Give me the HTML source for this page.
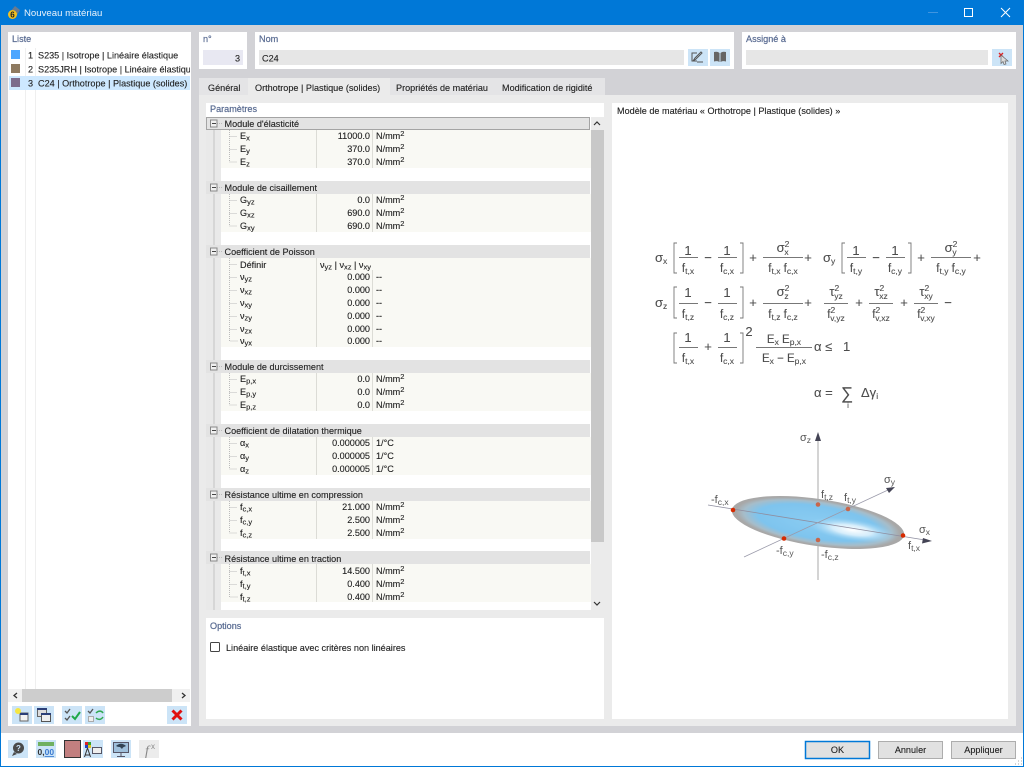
<!DOCTYPE html>
<html><head><meta charset="utf-8"><title>Nouveau matériau</title>
<style>
html,body{margin:0;padding:0;background:#fff;width:1024px;height:767px;overflow:hidden}
svg{display:block;font-family:"Liberation Sans",sans-serif;font-size:9px;fill:#222}
#root{filter:blur(.3px)}
.h{fill:#5a6c92;font-size:9.1px;stroke:#5a6c92;stroke-width:.22}
.b{fill:#222;font-size:9.1px;stroke:#222;stroke-width:.12}
.e{text-anchor:end}
.s{font-size:7.5px}
.f{fill:#4c4c4c;font-size:13px;stroke:#4c4c4c;stroke-width:.1}
.f .s{font-size:8.5px}
.c{text-anchor:middle}
.f .g{font-size:11.5px}
.gr{fill:#555;font-size:11px}
.gr .s{font-size:8.5px}
.d{stroke:#777;stroke-width:.9}
.t{stroke:#bbb;stroke-width:1;fill:none;stroke-dasharray:1 1}
.br{stroke:#777;stroke-width:.9;fill:none}
.ib{fill:#cce4f7}
</style></head><body>
<svg id="root" width="1024" height="767" viewBox="0 0 1024 767" xmlns="http://www.w3.org/2000/svg">
<rect width="1024" height="767" fill="#fff"/>
<rect x="0" y="0" width="1024" height="25" fill="#0078d7"/>
<rect x="1" y="25" width="1022" height="708" fill="#d2d2d6"/>
<rect x="0" y="25" width="1" height="742" fill="#0078d7"/><rect x="1023" y="25" width="1" height="742" fill="#0078d7"/><rect x="0" y="766" width="1024" height="1" fill="#0078d7"/>
<path d="M10 12l5-6 5 4-3 5z" fill="#6a7a8e"/><circle cx="12.500" cy="14.500" r="4.500" fill="#f0c020"/><text x="12.500" y="17.500" class="c" style="font-size:8px;font-weight:bold;fill:#222">6</text>
<text x="24" y="16" style="font-size:9.6px;fill:#e8f2fb">Nouveau matériau</text>
<rect x="928" y="12" width="10" height="1" fill="#3f95e0"/>
<rect x="964.500" y="8.500" width="8" height="8" fill="none" stroke="#fff"/>
<path d="M1001 8l9 9M1010 8l-9 9" stroke="#fff" stroke-width="1" fill="none"/>

<!-- list panel -->
<rect x="8" y="32" width="183" height="694" fill="#fff"/>
<text x="12" y="42" class="h">Liste</text>
<rect x="25" y="48" width="1" height="641" fill="#efefef"/><rect x="35" y="48" width="1" height="641" fill="#efefef"/>
<rect x="9" y="76" width="181" height="14" fill="#cde8ff"/>
<rect x="11" y="50" width="9" height="9" fill="#4da6ff"/><rect x="11" y="64" width="9" height="9" fill="#8e7a60"/><rect x="11" y="78" width="9" height="9" fill="#7c6c8c"/>
<text x="33" y="58.500" class="e b">1</text><text x="33" y="72.500" class="e b">2</text><text x="33" y="86.500" class="e b">3</text>
<text x="38" y="58.500" class="b">S235 | Isotrope | Linéaire élastique</text>
<svg x="0" y="60" width="190" height="16"><text x="38" y="12.500" class="b">S235JRH | Isotrope | Linéaire élastique</text></svg>
<text x="38" y="86.500" class="b">C24 | Orthotrope | Plastique (solides)</text>
<rect x="8" y="689" width="182" height="13" fill="#f0f0f0"/><rect x="22" y="689" width="150" height="13" fill="#cdcdcd"/>
<path d="M17 693l-3 2.500 3 2.500M182 693l3 2.500-3 2.500" stroke="#333" stroke-width="1.300" fill="none"/>
<!-- list toolbar -->
<rect x="12" y="706" width="20" height="18" class="ib"/><rect x="34" y="706" width="20" height="18" class="ib"/><rect x="62" y="706" width="20" height="18" class="ib"/><rect x="85" y="706" width="20" height="18" class="ib"/><rect x="167" y="706" width="20" height="18" class="ib"/>
<rect x="20" y="713" width="8" height="8" fill="#f3f3f3" stroke="#666"/><rect x="20" y="713" width="8" height="2" fill="#2b3f78"/><circle cx="18" cy="711" r="3" fill="#f5e642"/>
<rect x="37.500" y="708.500" width="9" height="8" fill="#ddd" stroke="#666"/><rect x="37" y="708" width="10" height="2" fill="#2b3f78"/><rect x="41.500" y="713.500" width="9" height="8" fill="#eee" stroke="#555"/><rect x="41" y="713" width="10" height="2" fill="#2b3f78"/>
<path d="M65 711l2 2 3-4M65 718l2 2 3-4" stroke="#555" stroke-width="1.300" fill="none"/><path d="M72 716l3 3 5-7" stroke="#1fa84a" stroke-width="2" fill="none"/>
<path d="M88 711l2 2 3-4" stroke="#555" stroke-width="1.300" fill="none"/><rect x="88.500" y="716.500" width="5" height="5" fill="#eee" stroke="#aaa"/><path d="M96 713c3-3 6-2 7 0M103 717c-2 3-5 3-7 1" stroke="#2fa84f" stroke-width="1.500" fill="none"/>
<path d="M172.500 710.500l9 9M181.500 710.500l-9 9" stroke="#e01010" stroke-width="3" fill="none"/>

<!-- n° -->
<rect x="199" y="32" width="48" height="37" fill="#fff"/>
<text x="203" y="42" class="h">n°</text>
<rect x="203" y="50" width="40" height="15" fill="#e8e8f2"/>
<text x="240" y="61.500" class="e b">3</text>
<!-- Nom -->
<rect x="255" y="32" width="479" height="37" fill="#fff"/>
<text x="259" y="42" class="h">Nom</text>
<rect x="259" y="50" width="425" height="15" fill="#e6e6e6"/>
<text x="262" y="61.500" class="b">C24</text>
<rect x="688" y="49" width="20" height="17" class="ib"/><rect x="710" y="49" width="20" height="17" class="ib"/>
<path d="M697 53h-5v8h5M693 61l2-3 6-6 1 1-6 6zM697 62h6" stroke="#555" stroke-width="1" fill="none"/>
<path d="M714 52c2-.5 4-.5 5.500 1v9c-1.500-1-3.500-1-5.500-.5zM720.500 53c1.500-1.500 3.500-1.500 5.500-1v9.500c-2-.5-4-.5-5.500.5z" fill="#666"/>
<!-- Assigné -->
<rect x="742" y="32" width="274" height="37" fill="#fff"/>
<text x="746" y="42" class="h">Assigné à</text>
<rect x="746" y="50" width="242" height="15" fill="#e6e6e6"/>
<rect x="992" y="49" width="20" height="17" class="ib"/>
<path d="M999 53l4 4M1003 53l-4 4" stroke="#e02020" stroke-width="1.300"/><path d="M1001 55l7 6-3 0 1 3-2 .500-1-3-2 2z" fill="#ddd" stroke="#666" stroke-width=".7"/>

<!-- tabs -->
<rect x="199" y="78" width="49" height="17" fill="#e4e4e6"/>
<rect x="248" y="78" width="142" height="17" fill="#ebebeb"/>
<rect x="390" y="78" width="106" height="17" fill="#e4e4e6"/>
<rect x="496" y="78" width="109" height="17" fill="#e4e4e6"/>
<text x="208" y="91" class="b">Général</text>
<text x="255" y="91" class="b">Orthotrope | Plastique (solides)</text>
<text x="396" y="91" class="b">Propriétés de matériau</text>
<text x="502" y="91" class="b">Modification de rigidité</text>
<rect x="199" y="95" width="817" height="631" fill="#ebebeb"/>

<!-- params -->
<rect x="206" y="103" width="398" height="507" fill="#fff"/>
<text x="210" y="112" class="h">Paramètres</text>
<rect x="206" y="117" width="15" height="493" fill="#e9e9e9"/><rect x="213" y="130" width="2" height="480" fill="#d6d6d6"/>
<rect x="591" y="117" width="13" height="493" fill="#ebebeb"/><rect x="591" y="130" width="13" height="412" fill="#c8c8c8"/>
<path d="M594 125l3-3 3 3M594 602l3 3 3-3" stroke="#333" stroke-width="1.200" fill="none"/>

<!-- bands -->
<g fill="#e3e3e3">
<rect x="206" y="117" width="384" height="13"/><rect x="206" y="181" width="384" height="13"/><rect x="206" y="245" width="384" height="13"/><rect x="206" y="360" width="384" height="13"/><rect x="206" y="424" width="384" height="13"/><rect x="206" y="488" width="384" height="13"/><rect x="206" y="551" width="384" height="13"/>
</g>
<rect x="206.500" y="117.500" width="383" height="12" fill="none" stroke="#666" stroke-dasharray="1 1"/>
<g fill="#f9f9f4">
<rect x="221" y="130" width="370" height="38"/><rect x="221" y="194" width="370" height="38"/><rect x="221" y="258" width="370" height="89"/><rect x="221" y="373" width="370" height="38"/><rect x="221" y="437" width="370" height="38"/><rect x="221" y="501" width="370" height="38"/><rect x="221" y="564" width="370" height="38"/>
</g>
<g fill="#dcdcd6">
<rect x="316" y="130" width="1" height="38"/><rect x="372" y="130" width="1" height="38"/>
<rect x="316" y="194" width="1" height="38"/><rect x="372" y="194" width="1" height="38"/>
<rect x="316" y="258" width="1" height="89"/><rect x="372" y="270" width="1" height="77"/>
<rect x="316" y="373" width="1" height="38"/><rect x="372" y="373" width="1" height="38"/>
<rect x="316" y="437" width="1" height="38"/><rect x="372" y="437" width="1" height="38"/>
<rect x="316" y="501" width="1" height="38"/><rect x="372" y="501" width="1" height="38"/>
<rect x="316" y="564" width="1" height="38"/><rect x="372" y="564" width="1" height="38"/>
</g>
<path class="t" d="M229.500 130v32h8M229.500 136.500h8M229.500 149.500h8M229.500 194v32h8M229.500 200.500h8M229.500 213.500h8M229.500 258v83h8M229.500 264.500h8M229.500 277.500h8M229.500 290.500h8M229.500 303.500h8M229.500 316.500h8M229.500 329.500h8M229.500 373v32h8M229.500 379.500h8M229.500 392.500h8M229.500 437v32h8M229.500 443.500h8M229.500 456.500h8M229.500 501v32h8M229.500 507.500h8M229.500 520.500h8M229.500 564v33h8M229.500 571.500h8M229.500 584.500h8"/>
<path class="t" d="M217 123.500h6M217 187.500h6M217 251.500h6M217 366.500h6M217 430.500h6M217 494.500h6M217 557.500h6"/>
<!-- expand boxes -->
<g fill="#f0f0f0" stroke="#888"><rect x="210.500" y="120" width="6.500" height="7"/><rect x="210.500" y="184" width="6.500" height="7"/><rect x="210.500" y="248" width="6.500" height="7"/><rect x="210.500" y="363" width="6.500" height="7"/><rect x="210.500" y="427" width="6.500" height="7"/><rect x="210.500" y="491" width="6.500" height="7"/><rect x="210.500" y="554" width="6.500" height="7"/></g>
<path d="M212 123.500h4M212 187.500h4M212 251.500h4M212 366.500h4M212 430.500h4M212 494.500h4M212 557.500h4" stroke="#444"/>
<!-- section titles -->
<g class="b">
<text x="224.500" y="127">Module d'élasticité</text>
<text x="224.500" y="191">Module de cisaillement</text>
<text x="224.500" y="255">Coefficient de Poisson</text>
<text x="224.500" y="370">Module de durcissement</text>
<text x="224.500" y="434">Coefficient de dilatation thermique</text>
<text x="224.500" y="498">Résistance ultime en compression</text>
<text x="224.500" y="562">Résistance ultime en traction</text>
</g>
<!-- labels -->
<g class="b">
<text x="240" y="139">E<tspan class="s" dy="1.500">x</tspan></text><text x="240" y="152">E<tspan class="s" dy="1.500">y</tspan></text><text x="240" y="165">E<tspan class="s" dy="1.500">z</tspan></text>
<text x="240" y="203">G<tspan class="s" dy="1.500">yz</tspan></text><text x="240" y="216">G<tspan class="s" dy="1.500">xz</tspan></text><text x="240" y="229">G<tspan class="s" dy="1.500">xy</tspan></text>
<text x="240" y="268">Définir</text>
<text x="240" y="280">ν<tspan class="s" dy="1.500">yz</tspan></text><text x="240" y="293">ν<tspan class="s" dy="1.500">xz</tspan></text><text x="240" y="306">ν<tspan class="s" dy="1.500">xy</tspan></text><text x="240" y="319">ν<tspan class="s" dy="1.500">zy</tspan></text><text x="240" y="332">ν<tspan class="s" dy="1.500">zx</tspan></text><text x="240" y="344">ν<tspan class="s" dy="1.500">yx</tspan></text>
<text x="240" y="382">E<tspan class="s" dy="1.500">p,x</tspan></text><text x="240" y="395">E<tspan class="s" dy="1.500">p,y</tspan></text><text x="240" y="408">E<tspan class="s" dy="1.500">p,z</tspan></text>
<text x="240" y="446">α<tspan class="s" dy="1.500">x</tspan></text><text x="240" y="459">α<tspan class="s" dy="1.500">y</tspan></text><text x="240" y="472">α<tspan class="s" dy="1.500">z</tspan></text>
<text x="240" y="510">f<tspan class="s" dy="1.500">c,x</tspan></text><text x="240" y="523">f<tspan class="s" dy="1.500">c,y</tspan></text><text x="240" y="536">f<tspan class="s" dy="1.500">c,z</tspan></text>
<text x="240" y="574">f<tspan class="s" dy="1.500">t,x</tspan></text><text x="240" y="587">f<tspan class="s" dy="1.500">t,y</tspan></text><text x="240" y="600">f<tspan class="s" dy="1.500">t,z</tspan></text>
</g>
<!-- values -->
<g class="b" text-anchor="end">
<text x="370" y="139">11000.0</text><text x="370" y="152">370.0</text><text x="370" y="165">370.0</text>
<text x="370" y="203">0.0</text><text x="370" y="216">690.0</text><text x="370" y="229">690.0</text>
<text x="370" y="280">0.000</text><text x="370" y="293">0.000</text><text x="370" y="306">0.000</text><text x="370" y="319">0.000</text><text x="370" y="332">0.000</text><text x="370" y="344">0.000</text>
<text x="370" y="382">0.0</text><text x="370" y="395">0.0</text><text x="370" y="408">0.0</text>
<text x="370" y="446">0.000005</text><text x="370" y="459">0.000005</text><text x="370" y="472">0.000005</text>
<text x="370" y="510">21.000</text><text x="370" y="523">2.500</text><text x="370" y="536">2.500</text>
<text x="370" y="574">14.500</text><text x="370" y="587">0.400</text><text x="370" y="600">0.400</text>
</g>
<text x="320" y="268" class="b">ν<tspan class="s" dy="1.500">yz</tspan><tspan dy="-1.500"> | ν</tspan><tspan class="s" dy="1.500">xz</tspan><tspan dy="-1.500"> | ν</tspan><tspan class="s" dy="1.500">xy</tspan></text>
<!-- units -->
<g class="b">
<text x="376" y="139">N/mm<tspan class="s" dy="-3">2</tspan></text><text x="376" y="152">N/mm<tspan class="s" dy="-3">2</tspan></text><text x="376" y="165">N/mm<tspan class="s" dy="-3">2</tspan></text>
<text x="376" y="203">N/mm<tspan class="s" dy="-3">2</tspan></text><text x="376" y="216">N/mm<tspan class="s" dy="-3">2</tspan></text><text x="376" y="229">N/mm<tspan class="s" dy="-3">2</tspan></text>
<text x="376" y="280">--</text><text x="376" y="293">--</text><text x="376" y="306">--</text><text x="376" y="319">--</text><text x="376" y="332">--</text><text x="376" y="344">--</text>
<text x="376" y="382">N/mm<tspan class="s" dy="-3">2</tspan></text><text x="376" y="395">N/mm<tspan class="s" dy="-3">2</tspan></text><text x="376" y="408">N/mm<tspan class="s" dy="-3">2</tspan></text>
<text x="376" y="446">1/°C</text><text x="376" y="459">1/°C</text><text x="376" y="472">1/°C</text>
<text x="376" y="510">N/mm<tspan class="s" dy="-3">2</tspan></text><text x="376" y="523">N/mm<tspan class="s" dy="-3">2</tspan></text><text x="376" y="536">N/mm<tspan class="s" dy="-3">2</tspan></text>
<text x="376" y="574">N/mm<tspan class="s" dy="-3">2</tspan></text><text x="376" y="587">N/mm<tspan class="s" dy="-3">2</tspan></text><text x="376" y="600">N/mm<tspan class="s" dy="-3">2</tspan></text>
</g>
<!-- options -->
<rect x="206" y="618" width="398" height="101" fill="#fff"/>
<text x="210" y="629" class="h">Options</text>
<rect x="210.500" y="642.500" width="9" height="9" rx="1" fill="#fff" stroke="#444"/>
<text x="226" y="651" class="b">Linéaire élastique avec critères non linéaires</text>

<!-- right panel -->
<rect x="612" y="103" width="396" height="616" fill="#fff"/>
<text x="617" y="114" class="b">Modèle de matériau « Orthotrope | Plastique (solides) »</text>

<defs>
<radialGradient id="el2" cx=".5" cy=".5" r=".5"><stop offset="0" stop-color="#8accf2"/><stop offset=".7" stop-color="#7ec4ee"/><stop offset=".86" stop-color="#a6bdca"/><stop offset=".95" stop-color="#a8a8a8"/><stop offset="1" stop-color="#a8a8a8"/></radialGradient>
<radialGradient id="hl" cx=".5" cy=".5" r=".5"><stop offset="0" stop-color="#fff"/><stop offset=".45" stop-color="#e4f4fd" stop-opacity=".85"/><stop offset="1" stop-color="#9dd4f4" stop-opacity="0"/></radialGradient>
</defs>
<!-- formulas -->
<g class="f">
<text x="655" y="262">σ<tspan class="s" dy="2">x</tspan></text>
<text x="688" y="255" class="c">1</text><text x="688" y="272" class="c g">f<tspan class="s" dy="2">t,x</tspan></text>
<text x="727" y="255" class="c">1</text><text x="727" y="272" class="c g">f<tspan class="s" dy="2">c,x</tspan></text>
<text x="708" y="262" class="c">−</text><text x="753" y="262" class="c">+</text>
<text x="783" y="252" class="c">σ<tspan class="s" dy="-5">2</tspan><tspan class="s" dx="-5" dy="8">x</tspan></text>
<text x="783" y="272" class="c g">f<tspan class="s" dy="2">t,x</tspan><tspan dy="-2"> f</tspan><tspan class="s" dy="2">c,x</tspan></text>
<text x="808" y="262" class="c">+</text>
<text x="823" y="262">σ<tspan class="s" dy="2">y</tspan></text>
<text x="856" y="255" class="c">1</text><text x="856" y="272" class="c g">f<tspan class="s" dy="2">t,y</tspan></text>
<text x="895" y="255" class="c">1</text><text x="895" y="272" class="c g">f<tspan class="s" dy="2">c,y</tspan></text>
<text x="876" y="262" class="c">−</text><text x="921" y="262" class="c">+</text>
<text x="951" y="252" class="c">σ<tspan class="s" dy="-5">2</tspan><tspan class="s" dx="-5" dy="8">y</tspan></text>
<text x="951" y="272" class="c g">f<tspan class="s" dy="2">t,y</tspan><tspan dy="-2"> f</tspan><tspan class="s" dy="2">c,y</tspan></text>
<text x="977" y="262" class="c">+</text>
<!-- row 2 -->
<text x="655" y="307">σ<tspan class="s" dy="2">z</tspan></text>
<text x="688" y="297" class="c">1</text><text x="688" y="318" class="c g">f<tspan class="s" dy="2">t,z</tspan></text>
<text x="727" y="297" class="c">1</text><text x="727" y="318" class="c g">f<tspan class="s" dy="2">c,z</tspan></text>
<text x="708" y="307" class="c">−</text><text x="753" y="307" class="c">+</text>
<text x="783" y="296" class="c">σ<tspan class="s" dy="-5">2</tspan><tspan class="s" dx="-5" dy="8">z</tspan></text>
<text x="783" y="318" class="c g">f<tspan class="s" dy="2">t,z</tspan><tspan dy="-2"> f</tspan><tspan class="s" dy="2">c,z</tspan></text>
<text x="808" y="307" class="c">+</text>
<text x="836" y="296" class="c">τ<tspan class="s" dy="-5">2</tspan><tspan class="s" dx="-5" dy="8">yz</tspan></text>
<text x="836" y="318" class="c g">f<tspan class="s" dy="-5">2</tspan><tspan class="s" dx="-5" dy="8">v,yz</tspan></text>
<text x="859" y="307" class="c">+</text>
<text x="881" y="296" class="c">τ<tspan class="s" dy="-5">2</tspan><tspan class="s" dx="-5" dy="8">xz</tspan></text>
<text x="881" y="318" class="c g">f<tspan class="s" dy="-5">2</tspan><tspan class="s" dx="-5" dy="8">v,xz</tspan></text>
<text x="904" y="307" class="c">+</text>
<text x="926" y="296" class="c">τ<tspan class="s" dy="-5">2</tspan><tspan class="s" dx="-5" dy="8">xy</tspan></text>
<text x="926" y="318" class="c g">f<tspan class="s" dy="-5">2</tspan><tspan class="s" dx="-5" dy="8">v,xy</tspan></text>
<text x="948" y="307" class="c">−</text>
<!-- row 3 -->
<text x="688" y="342" class="c">1</text><text x="688" y="362" class="c g">f<tspan class="s" dy="2">t,x</tspan></text>
<text x="727" y="342" class="c">1</text><text x="727" y="362" class="c g">f<tspan class="s" dy="2">c,x</tspan></text>
<text x="708" y="351" class="c">+</text>
<text x="749" y="336" class="c">2</text>
<text x="784" y="343" class="c g">E<tspan class="s" dy="2">x</tspan><tspan dy="-2"> E</tspan><tspan class="s" dy="2">p,x</tspan></text>
<text x="784" y="362" class="c g">E<tspan class="s" dy="2">x</tspan><tspan dy="-2"> − E</tspan><tspan class="s" dy="2">p,x</tspan></text>
<text x="814" y="351">α ≤</text><text x="843" y="351">1</text>
<!-- row 4 -->
<text x="814" y="397">α =</text>
<text x="847" y="399" class="c" style="font-size:17px">∑</text>
<text x="848" y="408" class="c" style="font-size:8px">i</text>
<text x="861" y="397">Δγ<tspan class="s" dy="2">i</tspan></text>
</g>
<path class="d" d="M679 257.500h19M718 257.500h19M763 257.500h40M847 257.500h19M886 257.500h19M931 257.500h40M679 303.500h19M718 303.500h19M763 303.500h40M824 303.500h24M869 303.500h24M914 303.500h24M679 347.500h19M718 347.500h19M756 347.500h56"/>
<path class="br" d="M677 243h-3v30h3M740 243h3v30h-3M845 243h-3v30h3M908 243h3v30h-3M677 287h-3v31h3M740 287h3v31h-3M677 333h-3v30h3M740 333h3v30h-3"/>

<!-- 3D graph -->
<path d="M818 440V580" stroke="#aaa" stroke-width="1"/>
<path d="M818 432l-3 9h6z" fill="#445"/>
<ellipse cx="818" cy="522.500" rx="87" ry="23.500" transform="rotate(8.400 818 522.500)" fill="url(#el2)"/>
<ellipse cx="852" cy="530" rx="44" ry="11" transform="rotate(8.400 852 530)" fill="url(#hl)"/>
<path d="M708 505L925 540" stroke="#8e8ea0" stroke-width=".8"/><path d="M744 557L888 490" stroke="#9a9aaa" stroke-width=".8"/>
<path d="M932 541l-9-3-1 5.500z" fill="#445"/><path d="M895 487l-9 1 3 5z" fill="#445"/>
<circle cx="733" cy="510" r="2.300" fill="#d62a00"/><circle cx="903" cy="535.500" r="2.300" fill="#d62a00"/><circle cx="784" cy="538.500" r="2.300" fill="#d62a00"/><circle cx="848" cy="509" r="2.300" fill="#c8664a"/><circle cx="818" cy="504.500" r="2.300" fill="#c8664a"/><circle cx="818" cy="540" r="2.300" fill="#c8664a"/>
<g class="gr">
<text x="800" y="441">σ<tspan class="s" dy="2">z</tspan></text>
<text x="884" y="483">σ<tspan class="s" dy="2">y</tspan></text>
<text x="919" y="533">σ<tspan class="s" dy="2">x</tspan></text>
<text x="711" y="503">-f<tspan class="s" dy="2">c,x</tspan></text>
<text x="821" y="498">f<tspan class="s" dy="2">t,z</tspan></text>
<text x="844" y="501">f<tspan class="s" dy="2">t,y</tspan></text>
<text x="908" y="549">f<tspan class="s" dy="2">t,x</tspan></text>
<text x="776" y="554">-f<tspan class="s" dy="2">c,y</tspan></text>
<text x="821" y="558">-f<tspan class="s" dy="2">c,z</tspan></text>
</g>

<!-- bottom -->
<rect x="8" y="740" width="20" height="18" class="ib"/><rect x="36" y="740" width="20" height="18" class="ib"/><rect x="83" y="740" width="20" height="18" class="ib"/><rect x="111" y="740" width="20" height="18" class="ib"/><rect x="139" y="740" width="20" height="18" fill="#ececec"/>
<circle cx="18.500" cy="748" r="5.500" fill="#4a4a4a"/><path d="M14 752l-2 4 5-2z" fill="#4a4a4a"/><text x="18.500" y="751" class="c" style="font-size:8px;font-weight:bold;fill:#cce4f7">?</text>
<rect x="38" y="742" width="16" height="4" fill="#70b060"/><text x="37.500" y="755" style="font-size:8.500px;font-weight:bold;fill:#333">0,<tspan fill="#3a7ad0" text-decoration="underline">00</tspan></text>
<rect x="64.500" y="740.500" width="16" height="17" fill="#c27f7f" stroke="#333"/>
<rect x="85" y="742" width="3" height="3" fill="#e02020"/><rect x="88" y="742" width="3" height="3" fill="#30a030"/><rect x="85" y="745" width="3" height="3" fill="#2040c0"/><rect x="88" y="745" width="3" height="3" fill="#e0c020"/><path d="M87.500 748l-3 9M87.500 748l3 9M85 755h5" stroke="#333"/><rect x="92.500" y="747.500" width="9" height="6" fill="#eee" stroke="#556"/>
<rect x="113.500" y="742.500" width="15" height="10" fill="#9fc0dc" stroke="#556"/><path d="M116 746c3-3 7-3 10 0-2 1-3 1-4 3l-2-2c-1 0-2 0-4-1z" fill="#345"/><path d="M121 753v3M117 756.500h8" stroke="#556"/>
<text x="147" y="755" class="c" style="font-family:'Liberation Serif',serif;font-style:italic;font-size:14px;fill:#888">f</text><text x="153" y="749" class="c" style="font-size:8px;fill:#888">x</text>

<rect x="805.500" y="741.500" width="64" height="17" fill="#e1e1e1" stroke="#0078d7" stroke-width="1.500"/>
<rect x="878.500" y="741.500" width="64" height="17" fill="#e1e1e1" stroke="#adadad"/>
<rect x="951.500" y="741.500" width="64" height="17" fill="#e1e1e1" stroke="#adadad"/>
<text x="837.500" y="753" class="c b">OK</text><text x="910.500" y="753" class="c b">Annuler</text><text x="983.500" y="753" class="c b">Appliquer</text>
<path d="M1021 758h1M1018 761h1M1021 761h1M1015 764h1M1018 764h1M1021 764h1" stroke="#aaa"/>
</svg>
</body></html>
